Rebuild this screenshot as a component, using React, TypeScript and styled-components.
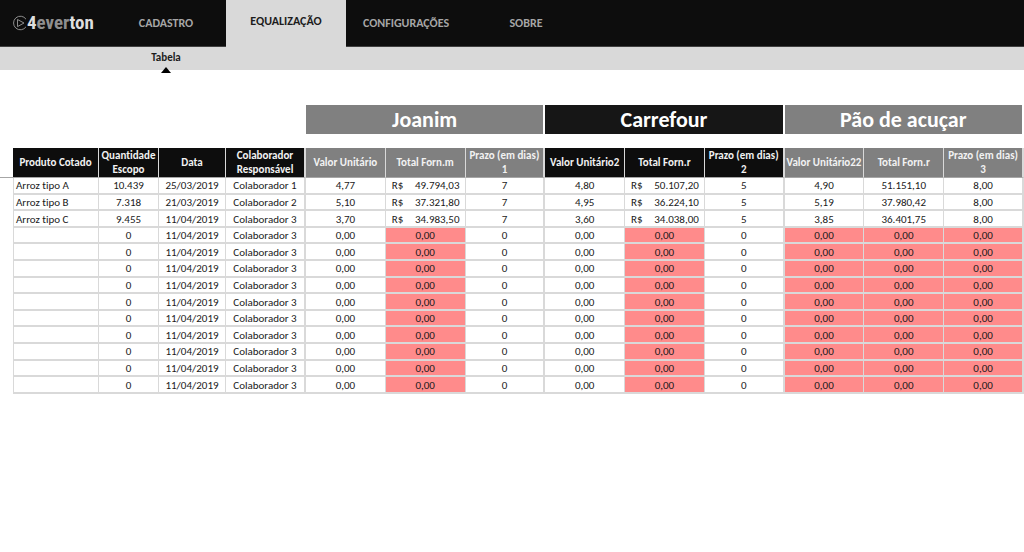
import React from "react";
import styled, { createGlobalStyle, css } from "styled-components";

const GlobalStyle = createGlobalStyle`
  * { box-sizing: border-box; }
  body {
    margin: 0;
    background: #ffffff;
    color: #1a1a1a;
    font-family: Calibri, Carlito, "Open Sans", "Noto Sans", sans-serif;
    font-size: 11px;
    font-variant-ligatures: none;
  }
`;

type Tone = "black" | "gray";

const line = "#d9d9d9";
const tones: Record<Tone, string> = { black: "#0d0d0d", gray: "#808080" };

const TopBar = styled.header`
  display: flex;
  height: 47px;
  border-bottom: 1px solid #404040;
  background: #0d0d0d;
`;

const Brand = styled.a`
  display: flex;
  flex: 0 0 106px;
  align-items: center;
  padding-left: 12px;
  color: #dedede;
  font-family: "Liberation Sans Narrow", "Roboto Condensed", "Liberation Sans", sans-serif;
  font-size: 19px;
  font-weight: 700;
  line-height: 20px;
  text-decoration: none;
`;

const BrandMuted = styled.span`
  color: #8f8f8f;
`;

const Tabs = styled.nav`
  display: flex;
`;

const Tab = styled.a<{ $active?: boolean }>`
  width: 120px;
  height: ${(p) => (p.$active ? 47 : 46)}px;
  padding-top: ${(p) => (p.$active ? 13 : 15)}px;
  background: ${(p) => (p.$active ? line : "transparent")};
  color: ${(p) => (p.$active ? "#1c1c1c" : "#a6a6a6")};
  font-size: 12px;
  font-weight: 700;
  line-height: 16px;
  text-align: center;
  text-decoration: none;
`;

const SubBar = styled.nav`
  display: flex;
  height: 23px;
  padding-left: 106px;
  background: ${line};
`;

const SubTab = styled.a`
  display: flex;
  flex-direction: column;
  align-items: center;
  gap: 2px;
  width: 120px;
  padding-top: 4px;
  color: #1c1c1c;
  font-size: 11px;
  font-weight: 700;
  line-height: 14px;
  text-decoration: none;
`;

const Marker = styled.svg`
  display: block;
  flex: none;
`;

const Sheet = styled.main`
  padding: 35px 0 0 13px;
`;

const Table = styled.table`
  width: 100%;
  height: 289px;
  border-collapse: separate;
  border-spacing: 0;
  table-layout: fixed;
`;

const Col = styled.col<{ $width?: number }>`
  width: ${(p) => (p.$width ? `${p.$width}px` : "auto")};
`;

const SupplierRow = styled.tr`
  height: 29px;
`;

const SpacerRow = styled.tr`
  height: 14px;
`;

const HeadRow = styled.tr`
  height: 30px;
`;

const Supplier = styled.th<{ $tone: Tone }>`
  padding: 0;
  border-right: 2px solid #ffffff;
  background: ${(p) => (p.$tone === "black" ? "#161616" : tones.gray)};
  color: #ffffff;
  font-size: 22px;
  font-weight: 700;
  line-height: 28px;
`;

const groupEnd = css`
  border-right: 2px solid ${line};
`;

const Blank = styled.td`
  padding: 0;
`;

const Head = styled.th<{ $tone: Tone; $end: boolean }>`
  position: relative;
  padding: 1px 1px 0;
  border-right: 1px solid ${line};
  border-bottom: 1px solid #a6a6a6;
  background: ${(p) => tones[p.$tone]};
  color: #f2f2f2;
  font-size: 11px;
  font-weight: 700;
  line-height: 14px;
  ${(p) => p.$end && groupEnd}

  &:first-child::before {
    position: absolute;
    right: 100%;
    bottom: -1px;
    width: 13px;
    height: 1px;
    background: #a6a6a6;
    content: "";
  }
`;

const Cell = styled.td<{ $alert: boolean; $end: boolean; $left?: boolean }>`
  padding: 2px 2px 0;
  border-right: 1px solid ${line};
  border-bottom: 2px solid ${line};
  background: ${(p) => (p.$alert ? "#ff8b8b" : "#ffffff")};
  line-height: 12px;
  text-align: ${(p) => (p.$left ? "left" : "center")};
  white-space: nowrap;
  ${(p) => p.$end && groupEnd}

  &:first-child {
    border-left: 1px solid ${line};
  }
`;

const Money = styled.span`
  display: flex;
  justify-content: space-between;
  padding: 0 3px 0 4px;
`;

const suppliers: { name: string; tone: Tone }[] = [
  { name: "Joanim", tone: "gray" },
  { name: "Carrefour", tone: "black" },
  { name: "Pão de acuçar", tone: "gray" },
];

const columns: { title: string; tone: Tone; width?: number }[] = [
  { title: "Produto Cotado", tone: "black", width: 86 },
  { title: "Quantidade Escopo", tone: "black", width: 60 },
  { title: "Data", tone: "black", width: 67 },
  { title: "Colaborador Responsável", tone: "black", width: 80 },
  { title: "Valor Unitário", tone: "gray" },
  { title: "Total Forn.m", tone: "gray" },
  { title: "Prazo (em dias) 1", tone: "gray" },
  { title: "Valor Unitário2", tone: "black" },
  { title: "Total Forn.r", tone: "black" },
  { title: "Prazo (em dias) 2", tone: "black" },
  { title: "Valor Unitário22", tone: "gray" },
  { title: "Total Forn.r", tone: "gray" },
  { title: "Prazo (em dias) 3", tone: "gray" },
];

const emptyRow = ["", "0", "11/04/2019", "Colaborador 3", "0,00", "0,00", "0", "0,00", "0,00", "0", "0,00", "0,00", "0,00"];

const rows: string[][] = [
  ["Arroz tipo A", "10.439", "25/03/2019", "Colaborador 1", "4,77", "R$ 49.794,03", "7", "4,80", "R$ 50.107,20", "5", "4,90", "51.151,10", "8,00"],
  ["Arroz tipo B", "7.318", "21/03/2019", "Colaborador 2", "5,10", "R$ 37.321,80", "7", "4,95", "R$ 36.224,10", "5", "5,19", "37.980,42", "8,00"],
  ["Arroz tipo C", "9.455", "11/04/2019", "Colaborador 3", "3,70", "R$ 34.983,50", "7", "3,60", "R$ 34.038,00", "5", "3,85", "36.401,75", "8,00"],
  ...Array.from({ length: 10 }, () => emptyRow),
];

const alertColumns = [5, 8, 10, 11, 12];
const isGroupEnd = (index: number) => index % 3 === 0 && index > 0;

function Value({ text }: { text: string }) {
  if (!text.startsWith("R$")) return <>{text}</>;
  const [currency, amount] = text.split(" ");
  return (
    <Money>
      <span>{currency}</span>
      <span>{amount}</span>
    </Money>
  );
}

export default function App() {
  return (
    <>
      <GlobalStyle />
      <TopBar>
        <Brand href="#">
          <svg width="15" height="16" viewBox="0 0 15 16" fill="none" stroke="#8c8c8c" aria-hidden="true">
            <path d="M14 4.2A6.8 6.8 0 1 0 14 11.8" />
            <path d="M5.5 4.5 12 8 5.5 11.6Z" strokeLinejoin="round" />
          </svg>
          4<BrandMuted>ever</BrandMuted>ton
        </Brand>
        <Tabs>
          <Tab href="#cadastro">CADASTRO</Tab>
          <Tab href="#equalizacao" $active aria-current="page">EQUALIZAÇÃO</Tab>
          <Tab href="#configuracoes">CONFIGURAÇÕES</Tab>
          <Tab href="#sobre">SOBRE</Tab>
        </Tabs>
      </TopBar>
      <SubBar>
        <SubTab href="#tabela">
          Tabela
          <Marker width="10" height="6" viewBox="0 0 10 6" aria-hidden="true">
            <path d="M5 0 10 6H0Z" fill="#000000" />
          </Marker>
        </SubTab>
      </SubBar>
      <Sheet>
        <Table>
          <colgroup>
            {columns.map((column, i) => (
              <Col key={i} $width={column.width} />
            ))}
          </colgroup>
          <thead>
            <SupplierRow>
              <Blank colSpan={4} />
              {suppliers.map((supplier) => (
                <Supplier key={supplier.name} colSpan={3} scope="colgroup" $tone={supplier.tone}>
                  {supplier.name}
                </Supplier>
              ))}
            </SupplierRow>
            <SpacerRow>
              <Blank colSpan={13} />
            </SpacerRow>
            <HeadRow>
              {columns.map((column, i) => (
                <Head key={i} scope="col" $tone={column.tone} $end={isGroupEnd(i)}>
                  {column.title}
                </Head>
              ))}
            </HeadRow>
          </thead>
          <tbody>
            {rows.map((row, r) => (
              <tr key={r}>
                {row.map((text, i) => (
                  <Cell key={i} $left={i === 0} $end={isGroupEnd(i)} $alert={r > 2 && alertColumns.includes(i)}>
                    <Value text={text} />
                  </Cell>
                ))}
              </tr>
            ))}
          </tbody>
        </Table>
      </Sheet>
    </>
  );
}
